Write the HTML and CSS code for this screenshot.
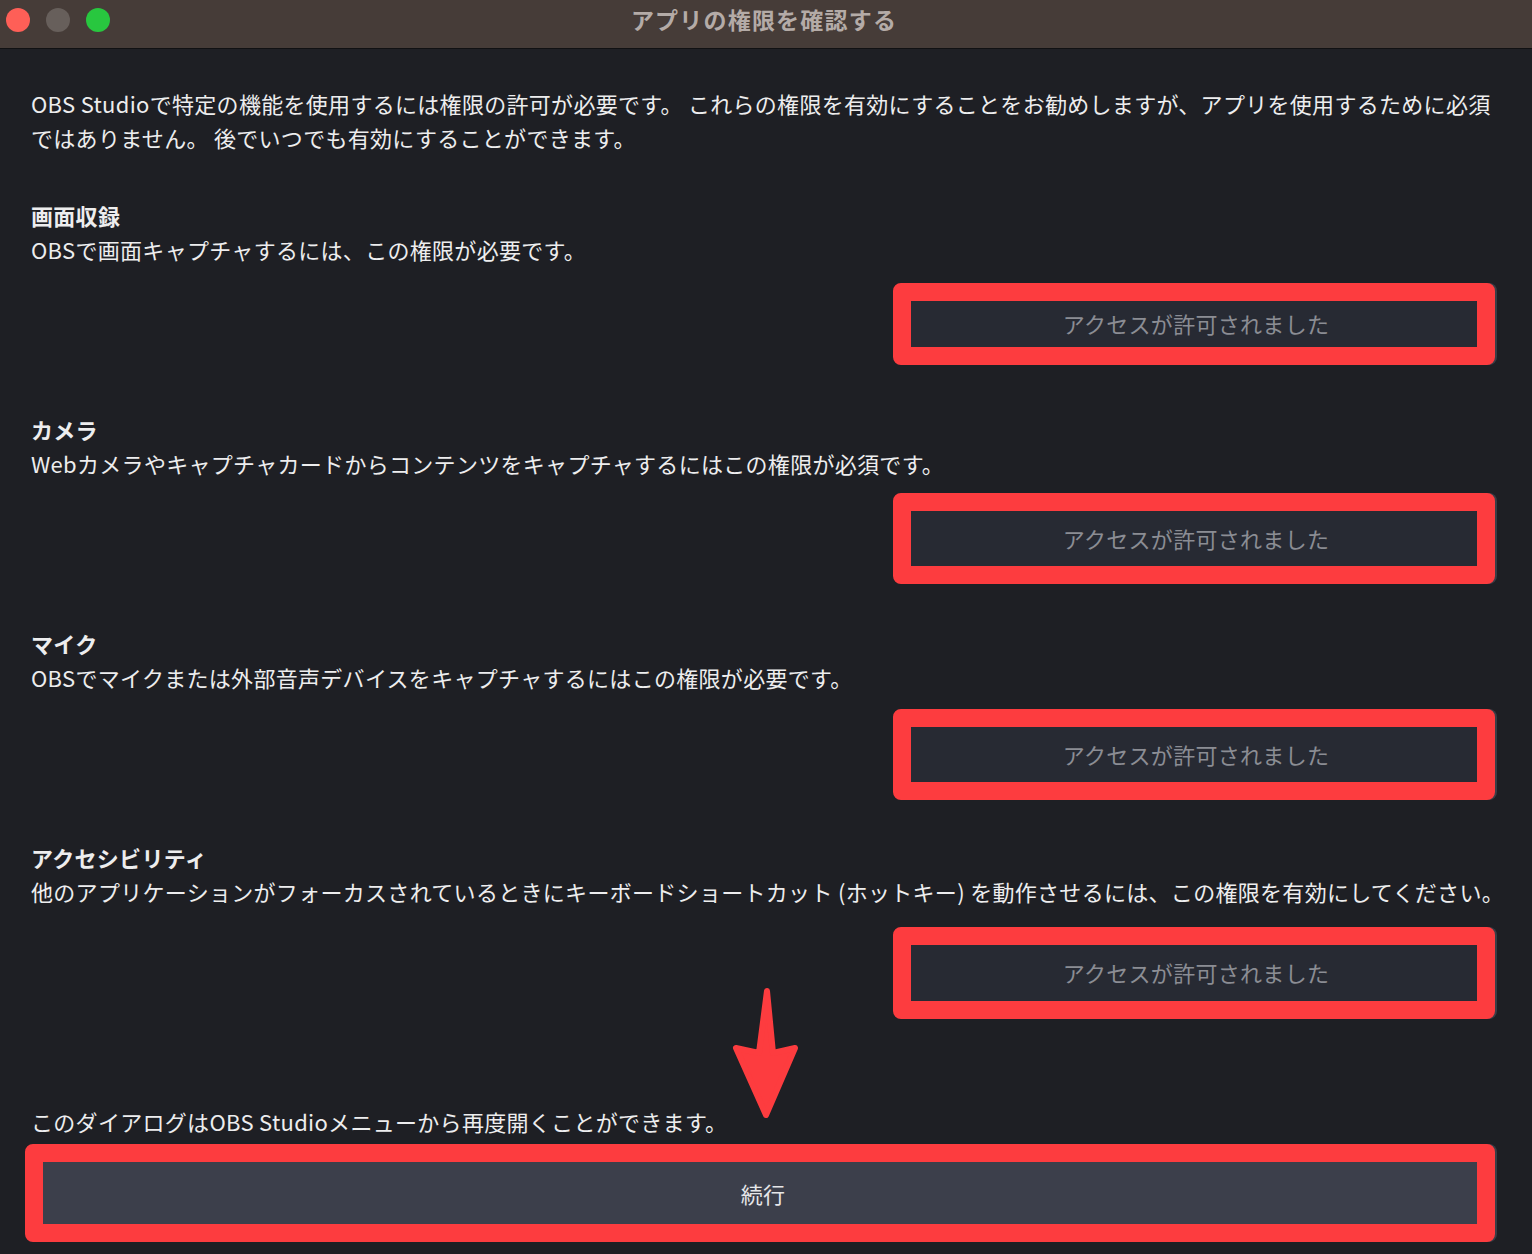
FILE: index.html
```html
<!DOCTYPE html>
<html lang="ja">
<head>
<meta charset="utf-8">
<title>アプリの権限を確認する</title>
<link rel="stylesheet" href="styles.css">
</head>
<body>
<div class="window">
  <header class="titlebar">
    <div class="lights">
      <span class="light red"></span>
      <span class="light gray"></span>
      <span class="light green"></span>
    </div>
    <div class="title">アプリの権限を確認する</div>
    <div class="spacer"></div>
  </header>
  <main class="content">
    <p class="intro">OBS Studioで特定の機能を使用するには権限の許可が必要です。 これらの権限を有効にすることをお勧めしますが、アプリを使用するために必須ではありません。 後でいつでも有効にすることができます。</p>

    <section class="perm">
      <h2 class="perm-title">画面収録</h2>
      <p class="perm-desc">OBSで画面キャプチャするには、この権限が必要です。</p>
      <button class="granted short">アクセスが許可されました</button>
    </section>

    <section class="perm">
      <h2 class="perm-title">カメラ</h2>
      <p class="perm-desc">Webカメラやキャプチャカードからコンテンツをキャプチャするにはこの権限が必須です。</p>
      <button class="granted">アクセスが許可されました</button>
    </section>

    <section class="perm">
      <h2 class="perm-title">マイク</h2>
      <p class="perm-desc">OBSでマイクまたは外部音声デバイスをキャプチャするにはこの権限が必要です。</p>
      <button class="granted mid">アクセスが許可されました</button>
    </section>

    <section class="perm">
      <h2 class="perm-title">アクセシビリティ</h2>
      <p class="perm-desc">他のアプリケーションがフォーカスされているときにキーボードショートカット (ホットキー) を動作させるには、この権限を有効にしてください。</p>
      <button class="granted low">アクセスが許可されました</button>
    </section>

    <p class="note">このダイアログはOBS Studioメニューから再度開くことができます。</p>
    <button class="continue">続行</button>
  </main>

  <svg class="arrow" width="72" height="138" viewBox="0 0 72 138" aria-hidden="true">
    <polygon points="37,6 43,68 65,63 36,130 6,63 29,68" fill="#fd3c3f" stroke="#fd3c3f" stroke-width="6" stroke-linejoin="round"/>
  </svg>
</div>
</body>
</html>
```

FILE: styles.css
```css
* { box-sizing: border-box; }

html, body {
  margin: 0;
  padding: 0;
  background: #1e1f24;
}

body {
  font-family: "Noto Sans CJK JP", "Noto Sans", sans-serif;
  color: #ededee;
  font-size: 22px;
  line-height: 34px;
  letter-spacing: 0.3px;
}

.window {
  position: relative;
  width: 1532px;
  height: 1254px;
  overflow: hidden;
  background: #1e1f24;
}

.titlebar {
  display: grid;
  grid-template-columns: 1fr auto 1fr;
  align-items: start;
  height: 49px;
  background: #463c38;
  border-bottom: 1px solid #111113;
  padding: 0 0 0 6px;
}

.lights {
  display: flex;
  gap: 16px;
  align-items: center;
  padding-top: 8px;
}

.light {
  width: 24px;
  height: 24px;
  border-radius: 50%;
  display: block;
}

.light.red { background: #fe5f57; }
.light.gray { background: #675f5b; }
.light.green { background: #28c73f; }

.title {
  font-weight: 700;
  font-size: 23px;
  line-height: 34px;
  padding-top: 2px;
  margin-right: 10px;
  color: #b4aba7;
  letter-spacing: 1.2px;
}

.content {
  display: flex;
  flex-direction: column;
  padding: 37px 37px 0 25px;
}

.intro,
.perm-title,
.perm-desc,
.note {
  margin: 0;
  padding-left: 6px;
}

.intro {
  margin-bottom: 44px;
}

.perm {
  display: flex;
  flex-direction: column;
  min-height: 214px;
}

.perm-title {
  font-size: 22px;
  font-weight: 700;
  line-height: 34px;
}

.perm-desc {
  white-space: nowrap;
}

.granted {
  align-self: flex-end;
  margin-top: 13px;
  width: 602px;
  height: 91px;
  border: 18px solid #fd3c3f;
  border-radius: 8px;
  background: #272a33;
  box-shadow: 2px 0 0 #3a3d46;
  color: #8b8d94;
  font-family: inherit;
  font-size: 22px;
  letter-spacing: 0.3px;
  padding: 0 0 2px 4px;
}

.granted.short {
  margin-top: 17px;
  height: 82px;
}

.granted.mid {
  margin-top: 15px;
}

.granted.low {
  margin-top: 19px;
  height: 92px;
}

.note {
  margin-top: 50px;
}

.continue {
  margin-top: 6px;
  width: 100%;
  height: 98px;
  border: 18px solid #fd3c3f;
  border-radius: 8px;
  background: #3c3f4b;
  box-shadow: 2px 0 0 #3a3d46;
  color: #e6e6e8;
  font-family: inherit;
  font-size: 22px;
  letter-spacing: 0.3px;
  padding: 0 0 0 6px;
}

.arrow {
  position: absolute;
  left: 730px;
  top: 985px;
}
```
